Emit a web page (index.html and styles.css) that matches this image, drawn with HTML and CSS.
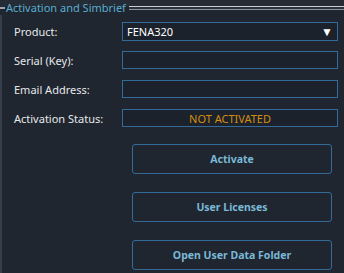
FILE: index.html
```html
<!DOCTYPE html>
<html>
<head>
<meta charset="utf-8">
<link rel="stylesheet" href="styles.css">
</head>
<body>
<div class="group">
  <div class="group-head">
    <span class="tick"></span>
    <span class="title">Activation and Simbrief</span>
    <span class="rule"></span>
  </div>
  <div class="group-body">
    <div class="form">
      <label class="lbl">Product:</label>
      <div class="field select"><span>FENA320</span><span class="arrow">▼</span></div>
      <label class="lbl">Serial (Key):</label>
      <div class="field"></div>
      <label class="lbl">Email Address:</label>
      <div class="field"></div>
      <label class="lbl">Activation Status:</label>
      <div class="field status">NOT ACTIVATED</div>
    </div>
    <div class="buttons">
      <button class="btn">Activate</button>
      <button class="btn">User Licenses</button>
      <button class="btn">Open User Data Folder</button>
    </div>
  </div>
</div>
</body>
</html>
```
FILE: styles.css
```css
html, body {
  margin: 0;
  padding: 0;
  background: #1f2630;
  width: 344px;
  height: 273px;
  overflow: hidden;
  font-family: "Noto Sans", "Open Sans", sans-serif;
}
.group {
  display: flex;
  flex-direction: column;
  height: 273px;
}
.group-head {
  display: flex;
  align-items: center;
  height: 15px;
  background: linear-gradient(#262c35 0 7px, #1f2630 7px);
}
.tick {
  width: 5px;
  height: 2px;
  background: #9aa3ab;
  margin-top: 1px;
}
.title {
  color: #5aaed0;
  font-size: 11px;
  padding: 0 3px 0 1px;
  line-height: 15px;
}
.rule {
  flex: 1;
  height: 2px;
  border-top: 1px solid #c9ced3;
  border-bottom: 1px solid #8b939b;
  background: #2b323b;
  margin-top: 1px;
}
.group-body {
  flex: 1;
  border-left: 2px solid #353d48;
  padding: 7px 6px 0 12px;
}
.form {
  display: grid;
  grid-template-columns: 108px 216px;
  grid-auto-rows: 18px;
  row-gap: 11px;
  align-items: center;
}
.lbl {
  color: #e6e8ea;
  font-size: 11px;
}
.field {
  box-sizing: border-box;
  height: 18px;
  border: 1px solid #336a98;
  background: #1c222b;
  display: flex;
  align-items: center;
  color: #ffffff;
  font-size: 11px;
}
.select {
  height: 19px;
  justify-content: space-between;
  padding: 0 4px;
}
.arrow {
  font-size: 12px;
}
.status {
  justify-content: center;
  color: #d48d12;
}
.buttons {
  display: flex;
  flex-direction: column;
  gap: 18px;
  margin: 17px 0 0 118px;
  width: 200px;
}
.btn {
  height: 30px;
  border: 1px solid #336a98;
  border-radius: 3px;
  background: #1f2630;
  color: #7bb8d6;
  font-family: inherit;
  font-weight: bold;
  font-size: 10.5px;
  padding: 0;
}
```
